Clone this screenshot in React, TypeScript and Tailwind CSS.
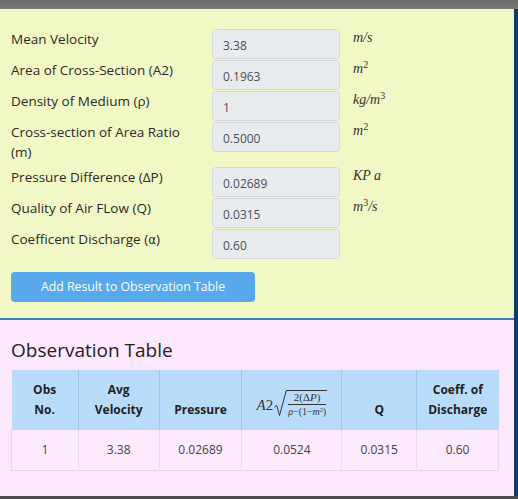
import React from "react";

const rows: { label: React.ReactNode; value: string; unit: React.ReactNode; tall?: boolean }[] = [
  { label: "Mean Velocity", value: "3.38", unit: <span>m/s</span> },
  { label: "Area of Cross-Section (A2)", value: "0.1963", unit: <span>m<sup className="text-[10px] not-italic">2</sup></span> },
  { label: "Density of Medium (ρ)", value: "1", unit: <span>kg/m<sup className="text-[10px] not-italic">3</sup></span> },
  { label: "Cross-section of Area Ratio (m)", value: "0.5000", unit: <span>m<sup className="text-[10px] not-italic">2</sup></span>, tall: true },
  { label: "Pressure Difference (ΔP)", value: "0.02689", unit: <span>KP<span className="ml-[3px]">a</span></span> },
  { label: "Quality of Air FLow (Q)", value: "0.0315", unit: <span>m<sup className="text-[10px] not-italic">3</sup>/s</span> },
  {
    label: (
      <span>
        Coefficent Discharge (<span style={{ fontFamily: '"DejaVu Sans", sans-serif' }} className="text-[12px]">α</span>)
      </span>
    ),
    value: "0.60",
    unit: null,
  },
];

function Formula() {
  return (
    <span className="inline-flex items-end text-[#333] font-normal" style={{ fontFamily: '"Liberation Serif", serif' }}>
      <span className="text-[15px] leading-[16px] mb-[5px]">
        <i>A</i>2
      </span>
      <svg width="13" height="28" viewBox="0 0 13 28" className="ml-[1px]">
        <path d="M0.5 17 L2.8 15.5 L5.5 25.5 L12.3 0.5 L13 0.5" fill="none" stroke="#333" strokeWidth="1" />
      </svg>
      <span className="flex flex-col items-center border-t border-[#333] mb-[1px] pt-[1px] px-[1px]">
        <span className="text-[11px] leading-[11px] border-b border-[#333] pb-[1px] px-[2px] w-full text-center">
          2(Δ<i>P</i>)
        </span>
        <span className="text-[10px] leading-[11px] pt-[1px]">
          <i>ρ</i>−(1−<i>m</i><sup className="text-[6px]">2</sup>)
        </span>
      </span>
    </span>
  );
}

export default function App() {
  return (
    <div
      className="w-[518px] h-[499px] flex flex-col bg-[#4b4b4b] overflow-hidden"
      style={{ fontFamily: '"Open Sans", "Noto Sans", sans-serif' }}
    >
      <div className="h-[9px] bg-gradient-to-b from-[#6a6a6a] to-[#7a7a7a]" />
      <div className="flex-1 flex min-h-0">
        <div className="flex-1 flex flex-col">
          <div className="h-[309px] bg-[#f2f7c6] px-[11px] pt-[20px] border-r border-[#e6f2f0]">
            {rows.map((r, i) => (
              <div key={i} className="flex items-start">
                <div className={`w-[186px] text-[13.5px] leading-[20px] text-[#2a2a2a] ${r.tall ? "pb-[5px]" : ""}`}>
                  {r.label}
                </div>
                <div className="ml-[15px] w-[128px] h-[30px] mb-[1px] bg-[#e9ecef] border border-[#d4d8dc] rounded-[4px] pl-[10px] pt-[8px] text-[12px] leading-[16px] text-[#495057]">
                  {r.value}
                </div>
                <div
                  className="ml-[13px] text-[14px] leading-[18px] italic text-[#333]"
                  style={{ fontFamily: '"Liberation Serif", serif' }}
                >
                  {r.unit}
                </div>
              </div>
            ))}
            <button className="mt-[12px] w-[244px] h-[30px] rounded-[4px] bg-[#58a9eb] text-white text-[12.3px] leading-[30px] text-center">
              Add Result to Observation Table
            </button>
          </div>
          <div className="h-[2px] bg-[#3d7bb6]" />
          <div className="flex-1 bg-[#fee8fd] px-[11px] pt-[16px]">
            <h2 className="text-[19px] leading-[28px] font-medium text-[#222] mb-[6px]">Observation Table</h2>
            <table className="w-[488px] border-collapse text-[12px] text-center">
              <thead>
                <tr className="bg-[#b9dcfb] text-[#222] font-bold">
                  <th className="w-[67px] align-bottom py-[10px] leading-[20px] border-r border-[#9cc7ee]">Obs<br />No.</th>
                  <th className="w-[81px] align-bottom py-[10px] leading-[20px] border-r border-[#9cc7ee]">Avg<br />Velocity</th>
                  <th className="w-[83px] align-bottom py-[10px] leading-[20px] border-r border-[#9cc7ee]">Pressure</th>
                  <th className="w-[100px] align-bottom pt-[8px] pb-[12px] leading-[20px] border-r border-[#9cc7ee]"><Formula /></th>
                  <th className="w-[75px] align-bottom py-[10px] leading-[20px] border-r border-[#9cc7ee]">Q</th>
                  <th className="w-[82px] align-bottom py-[10px] leading-[20px]">Coeff. of<br />Discharge</th>
                </tr>
              </thead>
              <tbody>
                <tr className="bg-[#fdebfd] text-[#444] border-b border-l border-r border-[#e6d6e8]">
                  <td className="py-[10px] leading-[20px] border-r border-[#eadcec]">1</td>
                  <td className="py-[10px] leading-[20px] border-r border-[#eadcec]">3.38</td>
                  <td className="py-[10px] leading-[20px] border-r border-[#eadcec]">0.02689</td>
                  <td className="py-[10px] leading-[20px] border-r border-[#eadcec]">0.0524</td>
                  <td className="py-[10px] leading-[20px] border-r border-[#eadcec]">0.0315</td>
                  <td className="py-[10px] leading-[20px]">0.60</td>
                </tr>
              </tbody>
            </table>
          </div>
        </div>
        <div className="w-[4px] bg-[#0c3c6a]" />
      </div>
      <div className="h-[3px] bg-[#4b4b4b]" />
    </div>
  );
}
